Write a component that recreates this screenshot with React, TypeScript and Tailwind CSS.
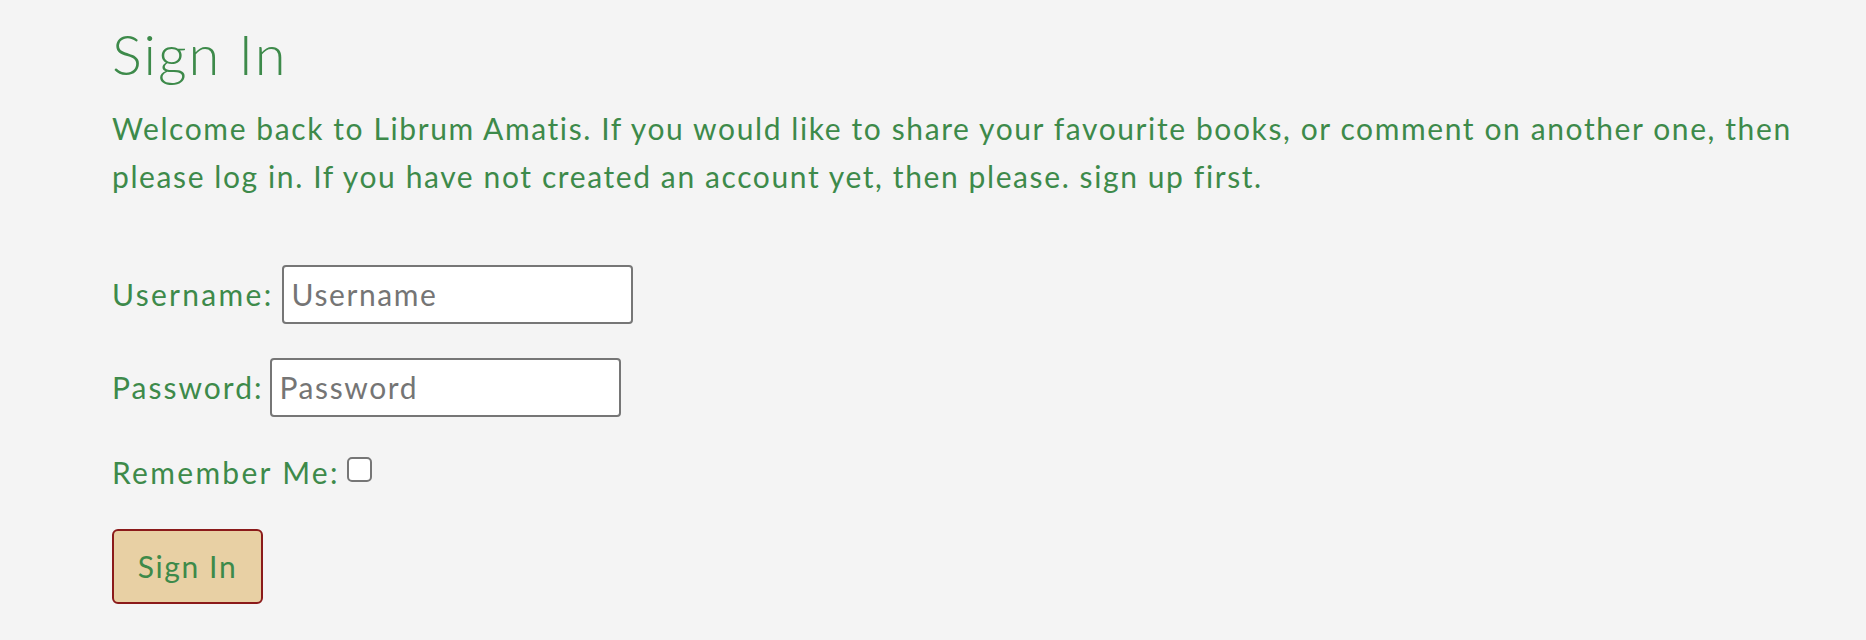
import React from 'react';

const SignInPage = () => {
  return (
    <div className="min-h-screen bg-[#f4f4f4] font-['Lato',sans-serif] text-[#3d8a4a] tracking-[1.6px]">
      <div className="w-[1830px] pl-[112px] pt-[18px]">
        <h1 className="text-[56px] leading-[72px] font-light tracking-[2px]">Sign In</h1>
        <p className="mt-[14px] text-[30px] leading-[48px]">
          Welcome back to Librum Amatis. If you would like to share your favourite books, or comment on another one, then please log in. If you have not created an account yet, then please. sign up first.
        </p>

        {/* Login form */}
        <form className="mt-[64px]" onSubmit={(e) => e.preventDefault()}>
          <p className="flex items-center text-[30px] leading-[60px] tracking-[2.3px]">
            <label htmlFor="id_login">Username:</label>
            <input
              id="id_login"
              type="text"
              placeholder="Username"
              className="ml-[9px] w-[351px] h-[59px] px-[7px] bg-white border-2 border-[#767676] rounded-[4px] text-[30px] tracking-[1.6px] placeholder:text-[#757575] outline-none"
            />
          </p>
          <p className="flex items-center text-[30px] leading-[60px] mt-[33px] tracking-[2px]">
            <label htmlFor="id_password">Password:</label>
            <input
              id="id_password"
              type="password"
              placeholder="Password"
              className="ml-[7px] w-[351px] h-[59px] px-[7px] bg-white border-2 border-[#767676] rounded-[4px] text-[30px] tracking-[1.6px] placeholder:text-[#757575] outline-none"
            />
          </p>
          <p className="flex items-center text-[30px] leading-[48px] mt-[31px] tracking-[2.3px]">
            <label htmlFor="id_remember">Remember Me:</label>
            <input
              id="id_remember"
              type="checkbox"
              className="ml-[7px] w-[25px] h-[25px] -mt-[6px] appearance-none bg-white border-2 border-[#767676] rounded-[5px]"
            />
          </p>
          <button
            type="submit"
            className="mt-[33px] w-[151px] h-[75px] bg-[#e8d0a4] border-2 border-[#8b1a1a] rounded-[6px] text-[30px] tracking-[1.6px] text-[#3d8a4a]"
          >
            Sign In
          </button>
        </form>
      </div>
    </div>
  );
};

export default SignInPage;
